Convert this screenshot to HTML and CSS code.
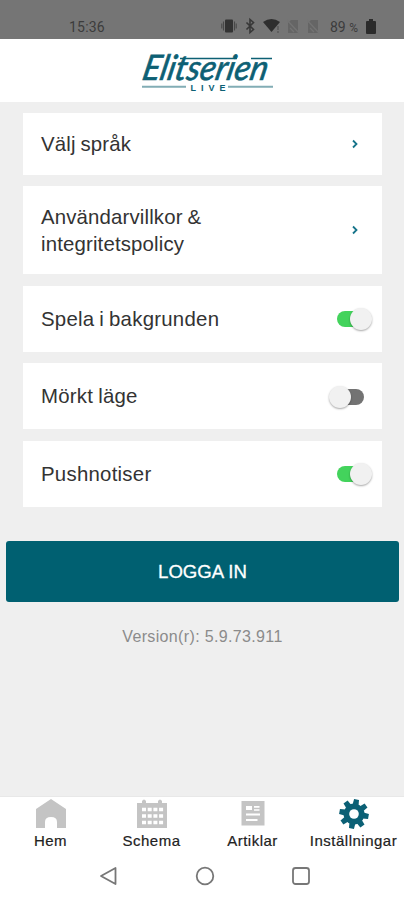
FILE: index.html
```html
<!DOCTYPE html>
<html lang="sv">

<head>
	<meta charset="utf-8">
	<title>Inställningar</title>
	<link rel="stylesheet" href="styles.css">
</head>

<body>

	<div class="statusbar">
		<span class="clock">15:36</span>
		<svg class="status-icons" width="100" height="18" viewBox="0 0 100 18">
			<!-- vibrate -->
			<rect x="4" y="2.500" width="8" height="13" rx="1" fill="#333"/>
			<path d="M2.500 4.500v9M13.500 4.500v9M.8 6.500v5M15.200 6.500v5" stroke="#484848" stroke-width="1.100"/>
			<!-- bluetooth -->
			<path d="M25.500 5.500l7 7-3.500 3v-13l3.500 3-7 7" fill="none" stroke="#383838" stroke-width="1.600"/>
			<!-- wifi -->
			<path d="M42 5q8.500-6 17 0l-8.500 10z" fill="#2e2e2e"/>
			<path d="M57 9v4M57 14v2" stroke="#555" stroke-width="1.300"/>
			<!-- no sim -->
			<g fill="#656565" stroke="#747474" stroke-width="1.300">
				<path d="M70 3h7v13h-10v-10z" stroke="none"/>
				<path d="M66 3l12 13M69 11l4 4" />
				<path d="M90 3h7v13h-10v-10z" stroke="none"/>
				<path d="M86 3l12 13M89 11l4 4" />
			</g>
		</svg>
		<span class="battery-text">89 <small>%</small></span>
		<svg class="battery" width="10" height="16" viewBox="0 0 10 16">
			<path d="M0 3q0-1 1-1h2v-2h4v2h2q1 0 1 1v11q0 1-1 1h-8q-1 0-1-1z" fill="#2b2b2b"/>
		</svg>
	</div>

	<div class="header">
		<svg class="logo" width="144" height="58" viewBox="-3 -5 144 58">
			<g fill="#0d6074">
				<text class="logo-name" transform="translate(5 35.500) skewX(-12)" textLength="125" lengthAdjust="spacingAndGlyphs">Elitserien</text>
				<text class="logo-live" x="54.500" y="46.500" textLength="35">LIVE</text>
			</g>
			<path d="M44 14.500h57M115 14.500h21" stroke="#0d6074" stroke-width="1.500"/>
			<path d="M6 42.700h44M92 42.700h45" stroke="#82adb5" stroke-width="2"/>
		</svg>
	</div>

	<div class="content">
		<div class="row row-link">
			<span>Välj språk</span>
			<svg class="arrow" width="6" height="10" viewBox="0 0 6 10"><path d="M1 1.500l3.500 3.500-3.500 3.500"/></svg>
		</div>
		<div class="row row-link row-tall">
			<span>Användarvillkor &amp;<br>integritetspolicy</span>
			<svg class="arrow" width="6" height="10" viewBox="0 0 6 10"><path d="M1 1.500l3.500 3.500-3.500 3.500"/></svg>
		</div>
		<div class="row">
			<span>Spela i bakgrunden</span>
			<div class="toggle on"><div class="knob"></div></div>
		</div>
		<div class="row">
			<span>Mörkt läge</span>
			<div class="toggle"><div class="knob"></div></div>
		</div>
		<div class="row">
			<span>Pushnotiser</span>
			<div class="toggle on"><div class="knob"></div></div>
		</div>

		<button class="login">LOGGA IN</button>
		<p class="version">Version(r): 5.9.73.911</p>
	</div>

	<div class="tabs">
		<div class="tab">
			<svg width="30" height="30" viewBox="0 0 30 30">
				<path d="M0 10L15 0l15 10v19h-9v-6q0-5-6-5t-6 5v6h-9z" fill="#c4c4c4"/>
			</svg>
			<span>Hem</span>
		</div>
		<div class="tab">
			<svg width="32" height="30" viewBox="0 0 32 30">
				<path d="M1 4h5v-2q2-3 4 0v2h12v-2q2-3 4 0v2h5v25h-30z" fill="#c4c4c4"/>
				<path d="M6 10.500h22M6 17h22M6 23.500h22" stroke="#fff" stroke-width="3.500" stroke-dasharray="4 1.700"/>
			</svg>
			<span>Schema</span>
		</div>
		<div class="tab">
			<svg width="24" height="30" viewBox="0 0 24 30">
				<rect x=".5" y="2" width="23" height="24.500" fill="#c4c4c4"/>
				<path d="M5 7h6v4h-6zM13 7h5.500v1.800h-5.500zM13 10.200h5.500v1.500h-5.500zM5 14.500h14v2h-14zM5 20h11.500v2h-11.500z" fill="#fff"/>
			</svg>
			<span>Artiklar</span>
		</div>
		<div class="tab">
			<svg width="30" height="30" viewBox="-15 -15 30 30">
				<g fill="#0b6075" transform="rotate(10)">
					<circle r="10.500"/>
					<path id="tooth" d="M-3-9l.5-5.700h5l.5 5.700v18l-.5 5.700h-5l-.5-5.700z"/>
					<use href="#tooth" transform="rotate(45)"/>
					<use href="#tooth" transform="rotate(90)"/>
					<use href="#tooth" transform="rotate(135)"/>
				</g>
				<circle r="4.800" fill="#fff"/>
			</svg>
			<span>Inställningar</span>
		</div>
	</div>

	<div class="navbar">
		<svg width="18" height="20" viewBox="0 0 18 20"><path d="M16.500 2v16L2 10z"/></svg>
		<svg width="20" height="20" viewBox="0 0 20 20"><circle cx="10" cy="10" r="8.300"/></svg>
		<svg width="18" height="20" viewBox="0 0 18 20"><rect x="1" y="2" width="16" height="16" rx="2.500"/></svg>
	</div>

</body>

</html>
```
FILE: styles.css
```css
:root {
	--background-color: #efefef;
	--main-color: #006071;
	--text-color: #333;
}
* { box-sizing: border-box;}
body {
	margin: 0;
	height: 900px;
	display: flex;
	flex-direction: column;
	background: var(--background-color);
	color: var(--text-color);
	font-family: "Liberation Sans", Arial, sans-serif;
}
svg { display: block; flex: none;}
.statusbar {
	height: 39px;
	padding: 14px 28px 0 69px;
	display: flex;
	align-items: center;
	background: #757575;
	color: #3c3c3c;
	font-family: Roboto, sans-serif;
	font-size: 14px;
}
.clock { flex: 1; letter-spacing: 0.2px;}
.battery-text { width: 36px; margin: 0 0 0 9px; white-space: nowrap;}
.battery-text small { font-size: 12px;}
.status-icons { margin-top: -1px;}
.header {
	height: 63px;
	padding: 0 0 0 6px;
	display: flex;
	justify-content: center;
	background: #fff;
}
.logo-name {
	font: italic 35px Lato, sans-serif;
	stroke: #0d6074;
	stroke-width: 0.7px;
}
.logo-live { font: bold 9px "Liberation Sans", sans-serif;}
.content {
	flex: 1;
	padding: 11px 22px 0 23px;
}
.row {
	height: 66px;
	margin-bottom: 11.6px;
	padding: 1px 10px 0 18px;
	display: flex;
	align-items: center;
	justify-content: space-between;
	background: #fff;
	font-size: 20.4px;
	line-height: 27px;
	letter-spacing: 0.25px;
	word-spacing: -1px;
}
.row-link { height: 62px; margin-bottom: 11px; letter-spacing: 0.15px;}
.row-tall { height: 88px; margin-bottom: 11.6px;}
.arrow { margin: -1px 14px 0 0;}
.arrow path { fill: none; stroke: #16748a; stroke-width: 1.8;}
.toggle {
	width: 27px;
	height: 16px;
	margin-right: 8px;
	display: flex;
	align-items: center;
	border-radius: 8px;
	background: #737373;
}
.toggle.on { background: #43d35c; justify-content: flex-end;}
.knob {
	flex: none;
	width: 22px;
	height: 22px;
	margin: 0 -8px;
	border-radius: 50%;
	background: #f1f1f1;
	box-shadow: 0 1px 2px rgba(0, 0, 0, 0.35);
}
.login {
	display: block;
	width: 393px;
	height: 61px;
	margin: 34px 0 0 -17px;
	padding: 1px 0 0;
	border: none;
	border-radius: 3px;
	background: var(--main-color);
	color: #fff;
	font: 18.6px "Liberation Sans", Arial, sans-serif;
	-webkit-text-stroke: 0.3px #fff;
}
.version {
	margin: 25px 0 0;
	color: #8b8b8b;
	text-align: center;
	font-size: 16px;
	line-height: 20px;
	letter-spacing: 0.35px;
}
.tabs {
	height: 58px;
	padding-top: 2px;
	display: grid;
	grid-template-columns: repeat(4, 101px);
	background: #fff;
	border-top: 1px solid #e8e8e8;
}
.tab {
	display: flex;
	flex-direction: column;
	align-items: center;
	color: #222;
	font-size: 15px;
	line-height: 18px;
	letter-spacing: 0.5px;
	white-space: nowrap;
	-webkit-text-stroke: 0.2px #222;
}
.tab span { margin-top: 3px;}
.navbar {
	height: 46px;
	padding: 12px 94px 0 99px;
	display: flex;
	justify-content: space-between;
	background: #fff;
}
.navbar svg { fill: none; stroke: #777; stroke-width: 1.8; stroke-linejoin: round;}
```
